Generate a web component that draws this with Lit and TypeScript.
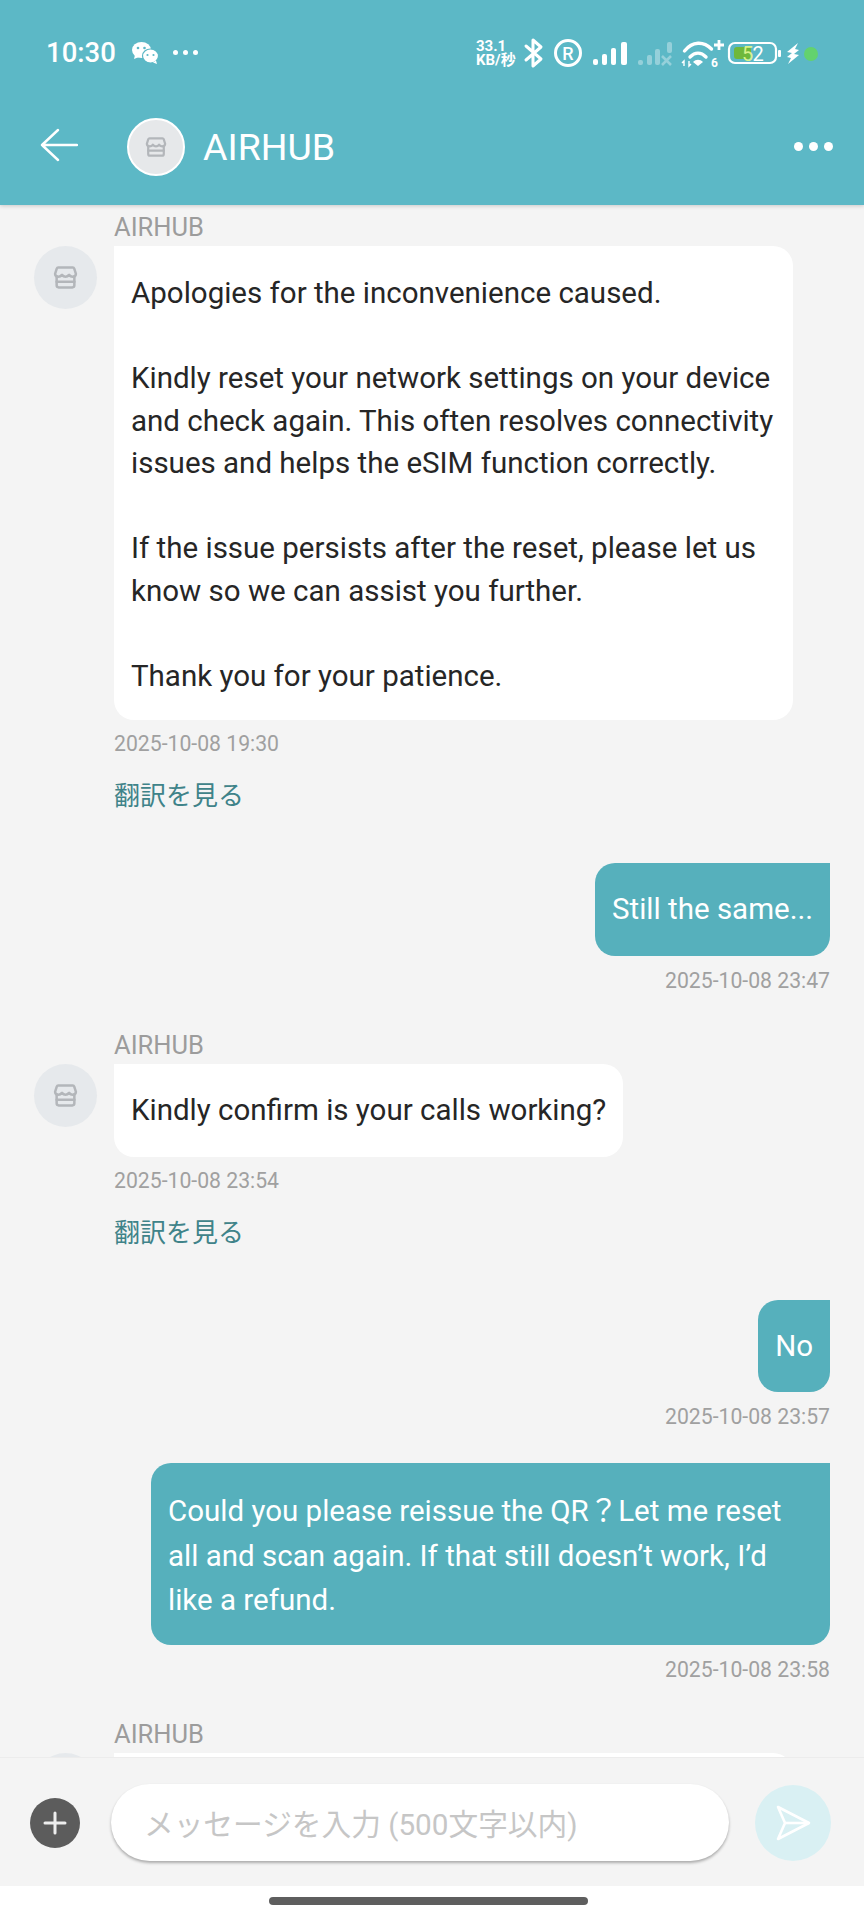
import { LitElement, html, css, svg } from 'lit';
import { customElement } from 'lit/decorators.js';

const shop = (size: number) => html`<svg width=${size} height=${size} viewBox="0 0 24 24" fill="none" stroke="#b3b6ba" stroke-width="2.4" stroke-linejoin="round" stroke-linecap="round">
  <path d="M5 2.500h14a1.500 1.500 0 0 1 1.400 1L22 8.500c0 1.600-1.400 2.800-3.300 2.800-1.500 0-2.500-.8-3.300-1.800-.8 1-2 1.800-3.400 1.800s-2.600-.8-3.400-1.800c-.8 1-1.800 1.800-3.300 1.800C3.400 11.300 2 10.100 2 8.500L3.600 3.500A1.500 1.500 0 0 1 5 2.500z" />
  <path d="M3.500 11v8.500a2 2 0 0 0 2 2h13a2 2 0 0 0 2-2V11" />
  <path d="M3.500 16h17" />
</svg>`;

type Msg = { side: 'in' | 'out'; text: string[]; time: string; last?: boolean; tall?: boolean };

const messages: Msg[] = [
  {
    side: 'in',
    tall: true,
    time: '2025-10-08 19:30',
    text: [
      'Apologies for the inconvenience caused.',
      '',
      'Kindly reset your network settings on your device and check again. This often resolves connectivity issues and helps the eSIM function correctly.',
      '',
      'If the issue persists after the reset, please let us know so we can assist you further.',
      '',
      'Thank you for your patience.',
    ],
  },
  { side: 'out', time: '2025-10-08 23:47', text: ['Still the same...'], last: true },
  { side: 'in', time: '2025-10-08 23:54', text: ['Kindly confirm is your calls working?'] },
  { side: 'out', time: '2025-10-08 23:57', text: ['No'] },
  {
    side: 'out',
    tall: true,
    time: '2025-10-08 23:58',
    text: ['Could you please reissue the QR？Let me reset all and scan again. If that still doesn’t work, I’d like a refund.'],
    last: true,
  },
];

@customElement('app-root')
export class AppRoot extends LitElement {
  static override styles = css`
    :host {
      display: flex;
      flex-direction: column;
      height: 1920px;
      overflow: hidden;
      background: #f4f4f4;
      font-family: Roboto, 'Noto Sans CJK JP', sans-serif;
    }

    .top {
      background: #5cb8c6;
      height: 205px;
      flex: none;
      color: #fff;
      box-shadow: 0 1px 4px rgba(0, 0, 0, 0.18);
      position: relative;
      z-index: 1;
    }

    .status {
      height: 105px;
      display: flex;
      align-items: center;
      padding: 0 44px 0 46px;
      box-sizing: border-box;
    }

    .clock {
      font-size: 27.500px;
      font-weight: 500;
      margin-right: 16px;
    }

    .status-dots {
      margin-left: 14px;
      display: flex;
      gap: 5px;
    }

    .status-dots i {
      width: 5px;
      height: 5px;
      border-radius: 50%;
      background: #fff;
    }

    .status-right {
      margin-left: auto;
      display: flex;
      align-items: center;
    }

    .speed {
      font-size: 15px;
      font-weight: 700;
      line-height: 14px;
      width: 44px;
    }

    .bar {
      height: 83px;
      display: flex;
      align-items: center;
      padding-left: 40px;
      padding-right: 31px;
    }

    .back {
      margin-top: -3px;
    }

    .avatar-lg {
      width: 54px;
      height: 54px;
      border-radius: 50%;
      border: 2px solid #fff;
      background: #e6e8ea;
      display: flex;
      align-items: center;
      justify-content: center;
      margin-left: 49px;
    }

    .title {
      font-size: 37.500px;
      margin-left: 18px;
      flex: 1;
    }

    .more {
      display: flex;
      gap: 6px;
    }

    .more i {
      width: 9px;
      height: 9px;
      border-radius: 50%;
      background: #fff;
    }

    .list {
      flex: 1;
      min-height: 0;
      overflow: hidden;
      padding: 8px 34px 0;
      font-size: 29.500px;
      line-height: 42.500px;
    }

    .name {
      margin-left: 80px;
      font-size: 25.500px;
      line-height: 28px;
      color: #9c9c9c;
      height: 33px;
    }

    .name.end {
      margin-top: 1px;
    }

    .row {
      display: flex;
      gap: 17px;
    }

    .avatar {
      width: 63px;
      height: 63px;
      border-radius: 50%;
      background: #e6e9ec;
      display: flex;
      align-items: center;
      justify-content: center;
      flex: none;
    }

    .bubble {
      padding: 25px 17px 25px;
      border-radius: 0 20px 20px 20px;
      background: #fff;
      color: #262626;
      max-width: 645px;
    }

    .bubble p {
      margin: 0;
      min-height: 42.500px;
    }

    .bubble.tall {
      padding-top: 26px;
      padding-bottom: 23px;
    }

    .out {
      margin-left: auto;
      border-radius: 20px 0 20px 20px;
      background: #56b0bc;
      color: #fff;
      width: fit-content;
      line-height: 44.500px;
      padding-top: 24px;
      padding-bottom: 24px;
    }

    .out.tall {
      padding-bottom: 22px;
    }

    .time {
      font-size: 21.200px;
      line-height: 24px;
      color: #a0a0a0;
      margin-top: 12px;
    }

    .in-meta {
      margin-left: 80px;
    }

    .in-group {
      margin-bottom: 52px;
    }

    .out-group {
      margin-bottom: 34px;
    }

    .out-group.last {
      margin-bottom: 38.500px;
    }

    .out-time {
      text-align: right;
      margin-top: 13px;
    }

    .translate {
      margin-top: 25px;
      font-size: 26px;
      line-height: 30px;
      color: #3f8389;
    }

    .foot {
      flex: none;
      height: 129px;
      box-sizing: border-box;
      border-top: 1px solid #ececec;
      background: #f4f4f4;
      display: flex;
      align-items: center;
      padding: 1px 32px 0 30px;
      position: relative;
    }

    .plus {
      width: 50px;
      height: 50px;
      border-radius: 50%;
      background: #5c5c5c;
      display: flex;
      align-items: center;
      justify-content: center;
      flex: none;
    }

    .input {
      margin-left: 31px;
      width: 618px;
      height: 77px;
      box-sizing: border-box;
      border-radius: 39px;
      background: #fff;
      box-shadow: 0 2px 3px rgba(0, 0, 0, 0.3);
      padding-left: 33px;
      display: flex;
      align-items: center;
      font-size: 29.700px;
      color: #c6c6c6;
    }

    .send {
      margin-left: 26px;
      width: 76px;
      height: 76px;
      border-radius: 50%;
      background: #d9f0f3;
      display: flex;
      align-items: center;
      justify-content: center;
    }

    .home {
      flex: none;
      height: 34px;
      background: #fff;
      display: flex;
      justify-content: center;
      padding: 11px 7px 0 0;
      box-sizing: border-box;
    }

    .home i {
      width: 319px;
      height: 8px;
      border-radius: 4px;
      background: #5e5e5e;
    }
  `;

  private statusIcons() {
    return html`<svg width="300" height="34" viewBox="0 0 300 34" fill="none">
      <g stroke="#fff" stroke-width="3" stroke-linejoin="round" stroke-linecap="round">
        <path d="M6 10l15 13-8 7V4l8 7L6 24" />
        <circle cx="48" cy="17" r="12.500" />
      </g>
      ${svg`<text x="48" y="23.500" font-size="18" font-weight="500" text-anchor="middle" fill="#fff" font-family="Roboto">R</text>`}
      <g fill="#fff">
        <rect x="73" y="23" width="5" height="6" rx="2" />
        <rect x="82" y="18" width="5" height="11" rx="2" />
        <rect x="91" y="12" width="5" height="17" rx="2" />
        <rect x="101" y="6" width="6" height="23" rx="2" />
      </g>
      <g fill="#fff" opacity="0.35">
        <rect x="118" y="24" width="5" height="5" rx="2" />
        <rect x="127" y="19" width="5" height="10" rx="2" />
        <rect x="135" y="13" width="5" height="16" rx="2" />
        <rect x="147" y="6" width="5" height="11" rx="2" />
        <path d="M142 20l9 9m0-9l-9 9" stroke="#fff" stroke-width="2.600" />
      </g>
      <g stroke="#fff" stroke-width="3.400" fill="none" stroke-linecap="round">
        <path d="M164.500 15c8-10 19-10 27-2" />
        <path d="M170 21c5-5 11-5 16 0" />
        <path d="M194 9h10M199 4v10" stroke-width="2.800" stroke-linecap="butt" />
      </g>
      <path d="M173 26c3-3 7-3 10 0l-5 4z" fill="#fff" />
      <path d="M164 30v-5l-2 2M169 25v5l2-2" stroke="#fff" stroke-width="1.400" />
      ${svg`<text x="191" y="31" font-size="12" font-weight="700" fill="#fff" font-family="Roboto">6</text>`}
      <rect x="209" y="7" width="47" height="20" rx="6" stroke="#fff" stroke-width="2.200" />
      <rect x="214" y="11" width="17" height="12" rx="3" fill="#6fb83c" />
      ${svg`<text x="222" y="24.500" font-size="20" fill="#d8f28a" font-family="Roboto">5</text>
      <text x="232.500" y="24.500" font-size="20" fill="#fff" font-family="Roboto">2</text>`}
      <rect x="258" y="14" width="3" height="7" rx="1" fill="#fff" />
      <path d="M278 7l-11 9 5 1-5 4 4 1-3 6 11-9-5-1 5-4-4-1z" fill="#fff" />
      <circle cx="291" cy="18" r="7" fill="#63d26e" />
    </svg>`;
  }

  override render() {
    return html`
      <div class="top">
        <div class="status">
          <span class="clock">10:30</span>
          <svg width="27" height="22" viewBox="0 0 27 22" fill="#fff">
            <ellipse cx="9.500" cy="8" rx="9.500" ry="8" />
            <path d="M3 13l-1 4 5-2z" />
            <ellipse cx="18.500" cy="14" rx="8" ry="7" stroke="#5cb8c6" stroke-width="1.200" />
            <path d="M24 18.500l1 3.500-4-1.500z" />
            <circle cx="6" cy="6" r="1.300" fill="#5cb8c6" />
            <circle cx="12.500" cy="6" r="1.300" fill="#5cb8c6" />
            <circle cx="15.500" cy="13" r="1.100" fill="#5cb8c6" />
            <circle cx="21.500" cy="13" r="1.100" fill="#5cb8c6" />
          </svg>
          <span class="status-dots"><i></i><i></i><i></i></span>
          <div class="status-right">
            <span class="speed">33.1<br />KB/秒</span>
            ${this.statusIcons()}
          </div>
        </div>
        <div class="bar">
          <svg class="back" width="38" height="34" viewBox="0 0 38 34" fill="none" stroke="#fff" stroke-width="2.400" stroke-linecap="round" stroke-linejoin="round">
            <path d="M37 17H2M18 2L2 17l16 15" />
          </svg>
          <div class="avatar-lg">${shop(22)}</div>
          <span class="title">AIRHUB</span>
          <span class="more"><i></i><i></i><i></i></span>
        </div>
      </div>
      <div class="list">
        ${messages.map((m) =>
          m.side === 'in'
            ? html`<div class="in-group">
                <div class="name">AIRHUB</div>
                <div class="row">
                  <div class="avatar">${shop(25)}</div>
                  <div class="bubble ${m.tall ? 'tall' : ''}">${m.text.map((t) => html`<p>${t}</p>`)}</div>
                </div>
                <div class="time in-meta">${m.time}</div>
                <div class="translate in-meta">翻訳を見る</div>
              </div>`
            : html`<div class="out-group ${m.last ? 'last' : ''}">
                <div class="bubble out ${m.tall ? 'tall' : ''}">${m.text.map((t) => html`<p>${t}</p>`)}</div>
                <div class="time out-time">${m.time}</div>
              </div>`
        )}
        <div class="name end">AIRHUB</div>
        <div class="row">
          <div class="avatar"></div>
          <div class="bubble" style="width: 645px"></div>
        </div>
      </div>
      <div class="foot">
        <div class="plus">
          <svg width="26" height="26" viewBox="0 0 26 26" stroke="#eee" stroke-width="3" stroke-linecap="round"><path d="M13 3v20M3 13h20" /></svg>
        </div>
        <div class="input">メッセージを入力 (500文字以内)</div>
        <div class="send">
          <svg width="38" height="38" viewBox="0 0 38 38" fill="none" stroke="#fff" stroke-width="2.600" stroke-linejoin="round">
            <path d="M4 3l31 16L4 35l7-16z" />
            <path d="M11 19h24" />
          </svg>
        </div>
      </div>
      <div class="home"><i></i></div>
    `;
  }
}
